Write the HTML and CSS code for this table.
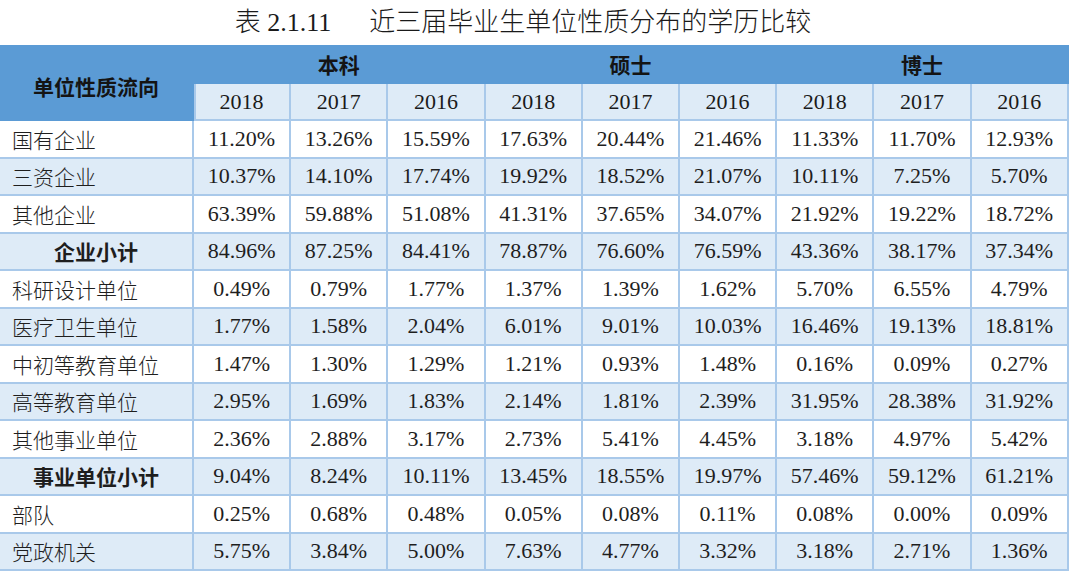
FILE: index.html
```html
<!DOCTYPE html>
<html lang="zh">
<head>
<meta charset="utf-8">
<title>近三届毕业生单位性质分布的学历比较</title>
<link rel="stylesheet" href="styles.css">
</head>
<body>
<div class="page">
  <h1 class="title"><span class="title-no">表 2.1.11</span><span class="title-text">近三届毕业生单位性质分布的学历比较</span></h1>
  <table class="grid">
    <colgroup>
      <col class="col-label">
      <col class="col-val"><col class="col-val"><col class="col-val">
      <col class="col-val"><col class="col-val"><col class="col-val">
      <col class="col-val"><col class="col-val"><col class="col-val">
    </colgroup>
    <thead>
      <tr class="head-top">
        <th rowspan="2" class="head-label">单位性质流向</th>
        <th colspan="3">本科</th>
        <th colspan="3">硕士</th>
        <th colspan="3">博士</th>
      </tr>
      <tr class="head-years">
        <th class="first-year">2018</th><th>2017</th><th>2016</th>
        <th>2018</th><th>2017</th><th>2016</th>
        <th>2018</th><th>2017</th><th>2016</th>
      </tr>
    </thead>
    <tbody>
      <tr class="odd"><td class="label">国有企业</td><td>11.20%</td><td>13.26%</td><td>15.59%</td><td>17.63%</td><td>20.44%</td><td>21.46%</td><td>11.33%</td><td>11.70%</td><td>12.93%</td></tr>
      <tr class="even"><td class="label">三资企业</td><td>10.37%</td><td>14.10%</td><td>17.74%</td><td>19.92%</td><td>18.52%</td><td>21.07%</td><td>10.11%</td><td>7.25%</td><td>5.70%</td></tr>
      <tr class="odd"><td class="label">其他企业</td><td>63.39%</td><td>59.88%</td><td>51.08%</td><td>41.31%</td><td>37.65%</td><td>34.07%</td><td>21.92%</td><td>19.22%</td><td>18.72%</td></tr>
      <tr class="even"><td class="label sub">企业小计</td><td>84.96%</td><td>87.25%</td><td>84.41%</td><td>78.87%</td><td>76.60%</td><td>76.59%</td><td>43.36%</td><td>38.17%</td><td>37.34%</td></tr>
      <tr class="odd"><td class="label">科研设计单位</td><td>0.49%</td><td>0.79%</td><td>1.77%</td><td>1.37%</td><td>1.39%</td><td>1.62%</td><td>5.70%</td><td>6.55%</td><td>4.79%</td></tr>
      <tr class="even"><td class="label">医疗卫生单位</td><td>1.77%</td><td>1.58%</td><td>2.04%</td><td>6.01%</td><td>9.01%</td><td>10.03%</td><td>16.46%</td><td>19.13%</td><td>18.81%</td></tr>
      <tr class="odd"><td class="label">中初等教育单位</td><td>1.47%</td><td>1.30%</td><td>1.29%</td><td>1.21%</td><td>0.93%</td><td>1.48%</td><td>0.16%</td><td>0.09%</td><td>0.27%</td></tr>
      <tr class="even"><td class="label">高等教育单位</td><td>2.95%</td><td>1.69%</td><td>1.83%</td><td>2.14%</td><td>1.81%</td><td>2.39%</td><td>31.95%</td><td>28.38%</td><td>31.92%</td></tr>
      <tr class="odd"><td class="label">其他事业单位</td><td>2.36%</td><td>2.88%</td><td>3.17%</td><td>2.73%</td><td>5.41%</td><td>4.45%</td><td>3.18%</td><td>4.97%</td><td>5.42%</td></tr>
      <tr class="even"><td class="label sub">事业单位小计</td><td>9.04%</td><td>8.24%</td><td>10.11%</td><td>13.45%</td><td>18.55%</td><td>19.97%</td><td>57.46%</td><td>59.12%</td><td>61.21%</td></tr>
      <tr class="odd"><td class="label">部队</td><td>0.25%</td><td>0.68%</td><td>0.48%</td><td>0.05%</td><td>0.08%</td><td>0.11%</td><td>0.08%</td><td>0.00%</td><td>0.09%</td></tr>
      <tr class="even"><td class="label">党政机关</td><td>5.75%</td><td>3.84%</td><td>5.00%</td><td>7.63%</td><td>4.77%</td><td>3.32%</td><td>3.18%</td><td>2.71%</td><td>1.36%</td></tr>
    </tbody>
  </table>
</div>
</body>
</html>
```

FILE: styles.css
```css
html, body {
  margin: 0;
  padding: 0;
  background: #ffffff;
}

.page {
  width: 1068px;
  font-family: "Liberation Serif", "Noto Sans CJK SC", serif;
  color: #1e1e1e;
}

.title {
  margin: 0;
  height: 45px;
  line-height: 46px;
  padding-right: 22px;
  text-align: center;
  font-size: 26px;
  font-weight: 300;
  color: #1a1a1a;
  white-space: nowrap;
}

.title-no {
  padding-right: 38px;
}

.grid {
  width: 1068px;
  table-layout: fixed;
  border-collapse: collapse;
  font-size: 22px;
}

.col-label {
  width: 193px;
}

.col-val {
  width: 97.2px;
}

.grid th,
.grid td {
  padding: 0;
  text-align: center;
  vertical-align: middle;
  border: 2px solid #a9c9ea;
  white-space: nowrap;
  overflow: hidden;
}

.head-top th {
  height: 37px;
  background: #5b9bd5;
  border-color: #5b9bd5;
  font-family: "Noto Sans CJK SC", sans-serif;
  font-weight: bold;
  font-size: 21px;
  color: #141414;
  border-top: 0;
}

.head-top .head-label {
  border-left: 0;
  border-bottom-color: #5b9bd5;
  border-right-color: #5b9bd5;
  padding-top: 8px;
}

.head-years th {
  height: 35px;
  background: #deebf7;
  font-weight: normal;
  color: #1a1a1a;
}

.head-years .first-year {
  box-shadow: inset 2px 0 0 #a9c9ea;
}

.head-years th:last-child,
.grid td:last-child {
  border-right: 2px solid #a9c9ea;
}

.grid tbody tr {
  height: 37.5px;
}

.odd td {
  background: #ffffff;
}

.even td {
  background: #deebf7;
}

.grid td {
  color: #1e1e1e;
}

.grid .label {
  text-align: left;
  padding-left: 12px;
  font-family: "Noto Sans CJK SC", sans-serif;
  font-size: 21px;
  font-weight: 300;
  border-left: 0;
}

.grid .label.sub {
  text-align: center;
  padding-left: 0;
  font-weight: bold;
}
```
